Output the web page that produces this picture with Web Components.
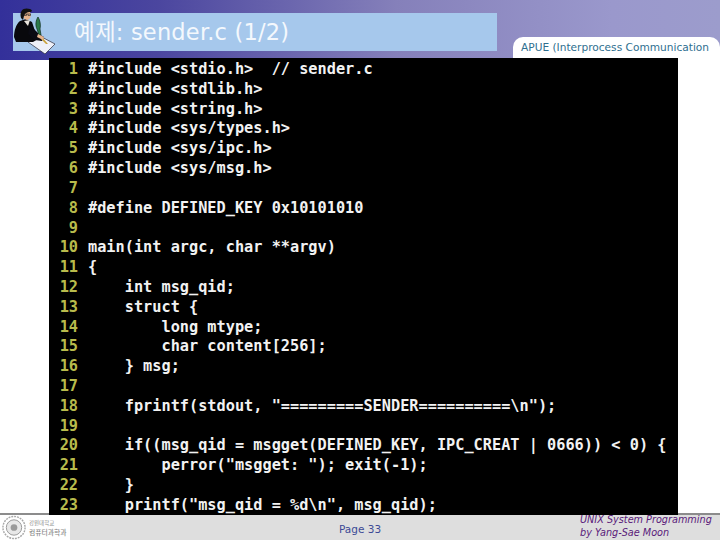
<!DOCTYPE html>
<html lang="ko">
<head>
<meta charset="utf-8">
<title>sender.c</title>
<style>
  html, body { margin: 0; padding: 0; background: #fff; }
  body { width: 720px; height: 540px; overflow: hidden; display: flex; flex-direction: column; }
</style>
</head>
<body>
<slide-header tab="APUE (Interprocess Communication">예제: sender.c (1/2)</slide-header>
<code-panel></code-panel>
<slide-footer page="Page 33"></slide-footer>

<script>
const CODE = [
  '#include <stdio.h>  // sender.c',
  '#include <stdlib.h>',
  '#include <string.h>',
  '#include <sys/types.h>',
  '#include <sys/ipc.h>',
  '#include <sys/msg.h>',
  '',
  '#define DEFINED_KEY 0x10101010',
  '',
  'main(int argc, char **argv)',
  '{',
  '    int msg_qid;',
  '    struct {',
  '        long mtype;',
  '        char content[256];',
  '    } msg;',
  '',
  '    fprintf(stdout, "=========SENDER==========\\n");',
  '',
  '    if((msg_qid = msgget(DEFINED_KEY, IPC_CREAT | 0666)) < 0) {',
  '        perror("msgget: "); exit(-1);',
  '    }',
  '    printf("msg_qid = %d\\n", msg_qid);'
]

class SlideHeader extends HTMLElement {
  constructor () {
    super()
    this.attachShadow({ mode: 'open' })
    this.shadowRoot.innerHTML = `
<style>
  :host {
    display: flex;
    flex: none;
    height: 60px;
    padding: 13px 0 0 13px;
    box-sizing: border-box;
    background: linear-gradient(90deg, #33309a 0%, #4b469f 22%, #8580ba 55%, #9a98cc 85%, #9c9ccc 100%);
  }
  .title {
    position: relative;
    width: 484px;
    height: 38px;
    padding-left: 61px;
    box-sizing: border-box;
    background: #a6c8ec;
    color: #f4f8fd;
    font: 22.5px/38px "DejaVu Sans", "Noto Sans CJK KR", sans-serif;
    letter-spacing: .2px;
    white-space: nowrap;
  }
  svg { position: absolute; left: 0; top: -6px; }
  .tab {
    align-self: flex-end;
    margin-left: 16px;
    flex: 1;
    height: 23px;
    padding-left: 8px;
    box-sizing: border-box;
    background: #fff;
    border-radius: 10px 10px 0 0;
    color: #2f6f8f;
    font: 10.6px/21px "DejaVu Sans", sans-serif;
    white-space: nowrap;
  }
</style>
<div class="title">
  <svg width="42" height="47" viewBox="0 0 42 47">
    <polygon points="15,35 25,28 42,37 32,47" fill="#eef0f8" stroke="#2a2a3a" stroke-width=".7"/>
    <path d="M7 14 C3 17 1 24 1 30 L3 35 L20 35 L27 31 L22 24 L19 15 L13 12 Z" fill="#08080c"/>
    <path d="M17 18 L26 27 L31 30 L29 34 L22 33 L15 27 Z" fill="#0a0a12"/>
    <path d="M11 14 L15 19 L17 13 Z" fill="#e9e4dc"/>
    <ellipse cx="14" cy="8" rx="3.800" ry="5" fill="#e6b48e"/>
    <path d="M8 11 C6 3 11 0 17 2 C20 3 19 5 17 5 C14 5 12 6 11 9 L10 13 Z" fill="#111"/>
    <path d="M11 7 h7 M11 7 v1.500 h2.500 v-1.500 M15 7 v1.500 h2.500 v-1.500" fill="none" stroke="#222" stroke-width=".6"/>
    <path d="M24 22 C22 18 23 13 25 10 C27 13 28 18 27 22 L28 28 L26 28 Z" fill="#2c7a4a" stroke="#0d2a1a" stroke-width=".7"/>
    <path d="M29 30 L35 37 L33 37 L28 32 Z" fill="#c9a13a"/>
    <path d="M25 27 L31 30 L30 33 L24 30 Z" fill="#e6b48e"/>
  </svg>
  <slot></slot>
</div>
<div class="tab">${this.getAttribute('tab')}</div>`
  }
}

class CodePanel extends HTMLElement {
  constructor () {
    super()
    this.attachShadow({ mode: 'open' })
    const rows = CODE.map((text, i) => {
      const safe = text.replace(/&/g, '&amp;').replace(/</g, '&lt;')
      return `<span class="num">${i + 1}</span><span class="txt">${safe}</span>`
    }).join('')
    this.shadowRoot.innerHTML = `
<style>
  :host {
    display: block;
    position: relative;
    z-index: 1;
    flex: none;
    width: 629px;
    height: 457px;
    margin: -2px 0 0 49px;
    padding-top: 2px;
    box-sizing: border-box;
    background: #000;
    overflow: hidden;
  }
  .lines {
    display: grid;
    grid-template-columns: 29px 1fr;
    column-gap: 10px;
    grid-auto-rows: 19.82px;
    font: bold 15.25px/19.82px "DejaVu Sans Mono", monospace;
  }
  .num { color: #b8bb4c; text-align: right; }
  .txt { color: #f2f2f2; white-space: pre; }
</style>
<div class="lines">${rows}</div>`
  }
}

class SlideFooter extends HTMLElement {
  constructor () {
    super()
    this.attachShadow({ mode: 'open' })
    this.shadowRoot.innerHTML = `
<style>
  :host {
    display: block;
    flex: none;
    position: relative;
    height: 27px;
    margin-top: -2px;
    box-sizing: border-box;
    border-top: 2px solid #8c8c8c;
    background: #dedede;
  }
  .row { display: grid; grid-template-columns: 70px 1fr 140px; height: 25px; }
  .logo {
    display: flex;
    align-items: center;
    gap: 2px;
    height: 25px;
    background: #fff;
    color: #8a8a8a;
    white-space: nowrap;
    overflow: hidden;
  }
  .logo span { display: block; font: 5.5px/9px "Noto Sans CJK KR", sans-serif; }
  .logo b { display: block; font: 500 6.8px/9px "Noto Sans CJK KR", sans-serif; }
  .page {
    padding: 6px 0 0 269px;
    color: #3c4a96;
    font: 10.5px/16px "DejaVu Sans", sans-serif;
    white-space: nowrap;
  }
  .by {
    margin-top: -2px;
    color: #5a1a7a;
    font: italic 9.7px/13px "DejaVu Sans", sans-serif;
    white-space: nowrap;
    position: relative;
    z-index: 2;
  }
</style>
<div class="row">
  <div class="logo">
    <svg width="26" height="25" viewBox="0 0 26 26" style="flex:none;margin-left:1px">
      <circle cx="13" cy="13" r="11.500" fill="none" stroke="#a8a8a8" stroke-width="1.500" stroke-dasharray="2 1"/>
      <circle cx="13" cy="13" r="8" fill="#e8e8e8" stroke="#999" stroke-width="1"/>
      <circle cx="13" cy="13" r="3.500" fill="#9a9a9a"/>
    </svg>
    <div><span>강원대학교</span><b>컴퓨터과학과</b></div>
  </div>
  <div class="page">${this.getAttribute('page')}</div>
  <div class="by">UNIX System Programming<br>by Yang-Sae Moon</div>
</div>`
  }
}

customElements.define('slide-header', SlideHeader)
customElements.define('code-panel', CodePanel)
customElements.define('slide-footer', SlideFooter)
</script>
</body>
</html>
